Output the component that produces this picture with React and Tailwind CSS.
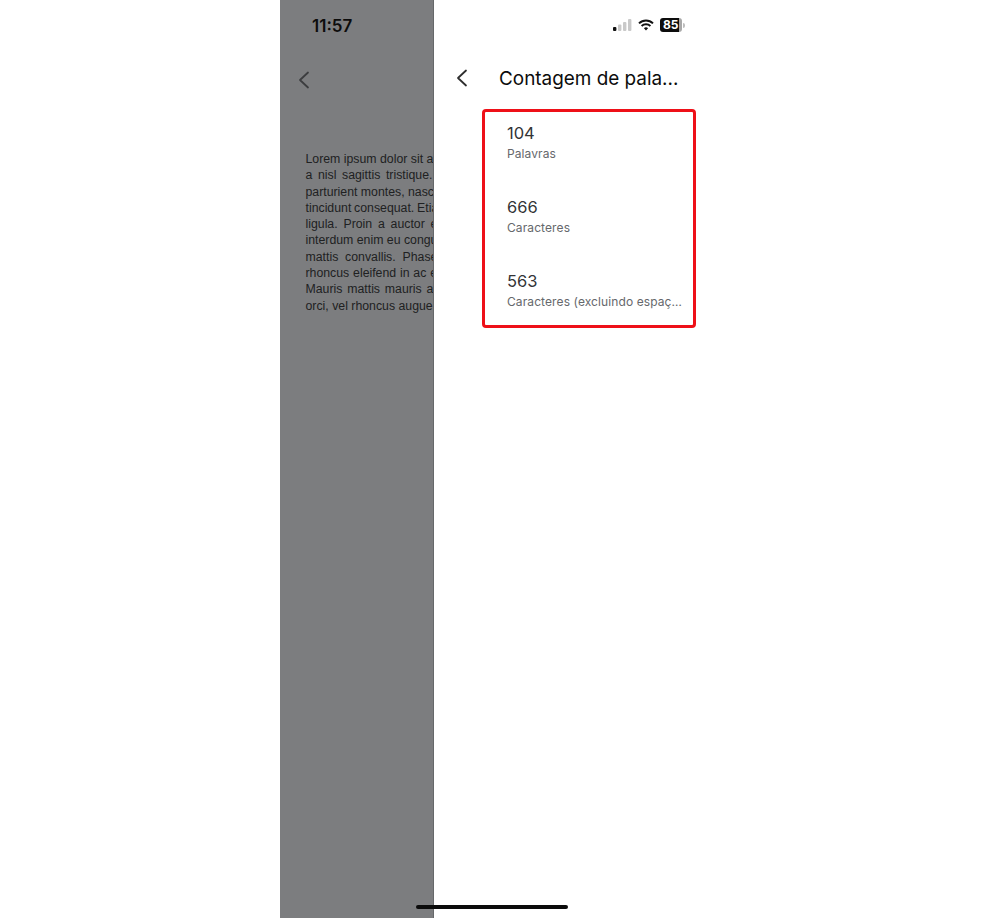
const lines = [
  ["Lorem ipsum dolor sit amet, consectetur", "[word-spacing:0px]"],
  ["a nisl sagittis tristique. Vestibulum", "[word-spacing:2.2px]"],
  ["parturient montes, nascetur ridiculus", "[word-spacing:0px]"],
  ["tincidunt consequat. Etiam sed", "[word-spacing:-0.6px]"],
  ["ligula. Proin a auctor elit", "[word-spacing:2.4px]"],
  ["interdum enim eu congue", "[word-spacing:0px]"],
  ["mattis convallis. Phasellus", "[word-spacing:3.4px]"],
  ["rhoncus eleifend in ac erat", "[word-spacing:0.4px]"],
  ["Mauris mattis mauris a", "[word-spacing:1.4px]"],
  ["orci, vel rhoncus augue quis", "[word-spacing:0px]"],
];

const stats = [
  ["104", "Palavras"],
  ["666", "Caracteres"],
  ["563", "Caracteres (excluindo espaços)"],
];

function Chevron({ className }) {
  return (
    <svg className={className} width="12" height="18" viewBox="0 0 12 18" fill="none" stroke="currentColor" strokeWidth="1.8" strokeLinecap="round" strokeLinejoin="round">
      <path d="M10 1.5 2 9l8 7.5" />
    </svg>
  );
}

function StatusIcons() {
  return (
    <div className="flex items-center gap-[6px]">
      <svg width="19" height="12" viewBox="0 0 19 12">
        <rect x="0" y="8" width="3.4" height="4" rx="1" fill="#111" />
        <rect x="5" y="5.5" width="3.4" height="6.5" rx="1" fill="#c9c9c9" />
        <rect x="10" y="3" width="3.4" height="9" rx="1" fill="#c9c9c9" />
        <rect x="15" y="0" width="3.4" height="12" rx="1" fill="#c9c9c9" />
      </svg>
      <svg width="16" height="12" viewBox="0 0 16 12" fill="none" stroke="#111" strokeLinecap="butt">
        <path d="M1 4.4a10 10 0 0 1 14 0" strokeWidth="2" />
        <path d="M3.6 7a6.4 6.4 0 0 1 8.8 0" strokeWidth="2" />
        <path d="M8 11.6 5.9 9.3a3 3 0 0 1 4.2 0Z" fill="#111" stroke="none" />
      </svg>
      <div className="flex items-center gap-px">
        <div className="flex h-[14px] w-[22px] items-center justify-start rounded-[3px] bg-[linear-gradient(90deg,#0d0d0d_88%,#a8a8a8_88%)] pl-[3px] text-[12px] leading-none font-bold text-white">
          85
        </div>
        <div className="h-[5px] w-[2px] rounded-r-sm bg-[#bdbdbd]" />
      </div>
    </div>
  );
}

export default function App() {
  return (
    <div className="relative mx-auto flex h-[918px] w-[424px] overflow-hidden bg-white font-['Inter',sans-serif]">
      <div className="flex h-full w-[154px] shrink-0 flex-col overflow-hidden border-r border-[#66686a] bg-[#7c7d7f]">
        <div className="pt-[16px] pl-[32px] text-[17px] leading-[21px] font-semibold text-[#0c0c0c]">11:57</div>
        <div className="pt-[34px] pl-[18px] text-[#3c3d3f]">
          <Chevron />
        </div>
        <div className="pt-[62px] pl-[25.5px] font-['Liberation_Sans',sans-serif] text-[12.3px] leading-[16.3px] whitespace-nowrap text-[#202122]">
          {lines.map(([t, c]) => (
            <div key={t} className={c}>{t}</div>
          ))}
        </div>
      </div>
      <div className="flex min-w-0 flex-1 flex-col">
        <div className="flex h-[52px] items-start justify-end pt-[18px] pr-[19px]">
          <StatusIcons />
        </div>
        <div className="flex h-[52px] items-center pl-[22px]">
          <Chevron className="text-[#2e2e2e]" />
          <div className="mt-[2px] ml-[31px] text-[18.9px] leading-[26px] text-[#0c0c0c]">Contagem de pala...</div>
        </div>
        <div className="mt-[5px] ml-[48px] flex h-[219px] w-[214px] flex-col rounded-[4px] border-[3px] border-[#ee1018] pt-[9px] pl-[22px]">
          {stats.map(([n, l]) => (
            <div key={n} className="h-[74px] shrink-0">
              <div className="text-[16.5px] leading-[24px] text-[#333436]">{n}</div>
              <div className="mt-[1px] w-[176px] truncate text-[12px] leading-[16px] tracking-[0.1px] text-[#66686c]">{l}</div>
            </div>
          ))}
        </div>
      </div>
      <div className="absolute bottom-[9px] left-[136px] h-[4px] w-[152px] rounded-full bg-[#0b0b0b]" />
    </div>
  );
}
